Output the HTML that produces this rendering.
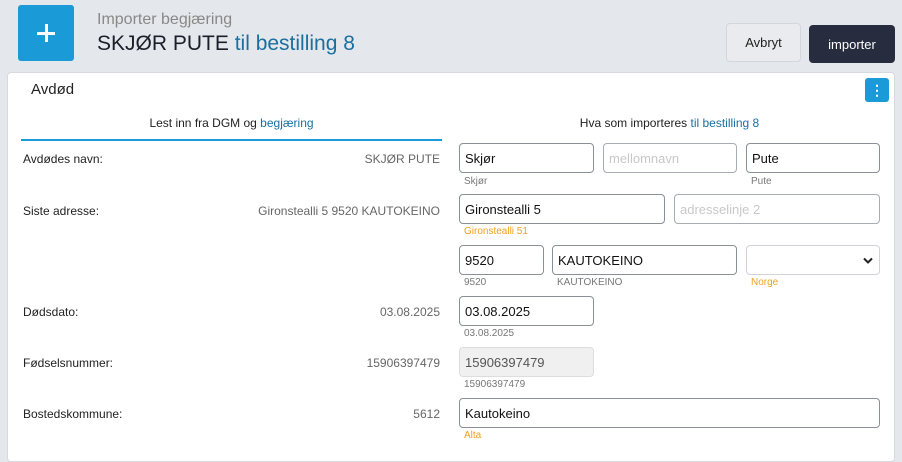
<!DOCTYPE html>
<html><head><meta charset="utf-8"><style>
*{box-sizing:border-box;margin:0;padding:0}
body{width:902px;height:444px;overflow:hidden;background:#e4e7eb;font-family:"Liberation Sans",Arial,sans-serif;position:relative;color:#222}
.a{position:absolute}
.plus{left:18px;top:5px;width:56px;height:56px;background:#1a9ad6;border-radius:3px}
.plus:before{content:"";position:absolute;left:19px;top:27px;width:18px;height:3px;background:#fff}
.plus:after{content:"";position:absolute;left:27px;top:19px;width:3px;height:18px;background:#fff}
.blue{color:#1a6fa0}
.btn{font-size:13px;display:flex;align-items:center;justify-content:center;border-radius:4px}
.panel{left:7px;top:72px;width:888px;height:390px;background:#fff;border:1px solid #d6d9de;border-radius:4px}
.lbl{left:23px;font-size:12px;color:#222}
.val{right:462px;font-size:12px;color:#666;text-align:right}
.in{border:1.5px solid #8a8f98;border-radius:4px;height:30px;font-size:13px;padding-left:5px;display:flex;align-items:center;color:#111;background:#fff}
.ph{color:#c8c8c8;border-color:#a8acb3}
.h{font-size:10px;color:#777}
.o{color:#f0a020}
</style></head><body>
<div class="a plus"></div>
<div class="a" style="left:97px;top:11px;font-size:16px;color:#888">Importer begjæring</div>
<div class="a" style="left:97px;top:32px;font-size:21px;color:#1b1f2a">SKJØR PUTE <span class="blue">til bestilling 8</span></div>
<div class="a btn" style="left:726px;top:23px;width:75px;height:39px;border:1px solid #d3d6db;background:#e9ebee">Avbryt</div>
<div class="a btn" style="left:809px;top:25px;width:86px;height:38px;background:#272c3f;color:#fff">importer</div>
<div class="a panel"></div>
<div class="a" style="left:31px;top:81px;font-size:15px">Avdød</div>
<div class="a" style="left:865px;top:78px;width:24px;height:24px;background:#1a9ad6;border-radius:3px;color:#fff;font-size:14px;text-align:center;line-height:24px;font-weight:bold">⋮</div>
<div class="a" style="left:21px;width:421px;top:116px;text-align:center;font-size:12px">Lest inn fra DGM og <span class="blue">begjæring</span></div>
<div class="a" style="left:21px;width:421px;top:139px;height:1.5px;background:#1a9ad6"></div>
<div class="a" style="left:459px;width:421px;top:116px;text-align:center;font-size:12px">Hva som importeres <span class="blue">til bestilling 8</span></div>

<div class="a lbl" style="top:152px">Avdødes navn:</div><div class="a val" style="top:152px">SKJØR PUTE</div>
<div class="a lbl" style="top:204px">Siste adresse:</div><div class="a val" style="top:204px">Gironstealli 5 9520 KAUTOKEINO</div>
<div class="a lbl" style="top:305px">Dødsdato:</div><div class="a val" style="top:305px">03.08.2025</div>
<div class="a lbl" style="top:356px">Fødselsnummer:</div><div class="a val" style="top:356px">15906397479</div>
<div class="a lbl" style="top:407px">Bostedskommune:</div><div class="a val" style="top:407px">5612</div>

<div class="a in" style="left:459px;top:143px;width:135px">Skjør</div>
<div class="a in ph" style="left:603px;top:143px;width:134px">mellomnavn</div>
<div class="a in" style="left:746px;top:143px;width:134px">Pute</div>
<div class="a h" style="left:464px;top:176px">Skjør</div>
<div class="a h" style="left:751px;top:176px">Pute</div>

<div class="a in" style="left:459px;top:194px;width:206px">Gironstealli 5</div>
<div class="a in ph" style="left:674px;top:194px;width:206px">adresselinje 2</div>
<div class="a h o" style="left:464px;top:226px">Gironstealli 51</div>

<div class="a in" style="left:459px;top:245px;width:85px">9520</div>
<div class="a in" style="left:552px;top:245px;width:185px">KAUTOKEINO</div>
<div class="a in" style="left:746px;top:245px;width:134px;border-color:#d0d3d8;border-width:1px;justify-content:flex-end;padding-right:6px"><svg width="10" height="7" viewBox="0 0 10 7"><path d="M1 1.5L5 5.5L9 1.5" fill="none" stroke="#222" stroke-width="2"/></svg></div>
<div class="a h" style="left:464px;top:277px">9520</div>
<div class="a h" style="left:557px;top:277px">KAUTOKEINO</div>
<div class="a h o" style="left:751px;top:277px">Norge</div>

<div class="a in" style="left:459px;top:296px;width:135px">03.08.2025</div>
<div class="a h" style="left:464px;top:328px">03.08.2025</div>

<div class="a in" style="left:459px;top:347px;width:135px;background:#f0f0f0;border:1px solid #ddd;color:#555">15906397479</div>
<div class="a h" style="left:464px;top:379px">15906397479</div>

<div class="a in" style="left:459px;top:398px;width:421px">Kautokeino</div>
<div class="a h o" style="left:464px;top:430px">Alta</div>
</body></html>
